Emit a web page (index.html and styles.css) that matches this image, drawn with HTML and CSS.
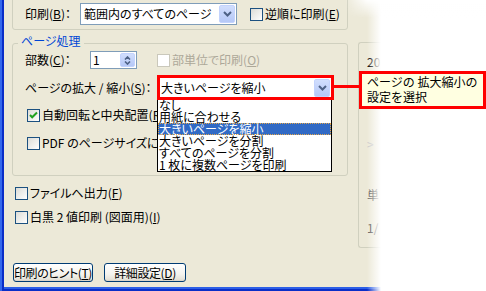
FILE: index.html
```html
<!DOCTYPE html>
<html lang="ja">
<head>
<meta charset="utf-8">
<title>印刷</title>
<link rel="stylesheet" href="styles.css">
</head>
<body>
<div class="dialog">
  <div class="main">
    <div class="grp-top">
      <span class="lbl lbl-print">印刷(<u>B</u>)：</span>
      <div class="combo combo-range">
        <span class="combo-text">範囲内のすべてのページ</span>
        <span class="combo-btn"><svg width="9" height="6" viewBox="0 0 9 6"><path d="M1 1l3.5 3.5L8 1" fill="none" stroke="#4D6185" stroke-width="2"/></svg></span>
      </div>
      <div class="chk-row chk-rev"><span class="chk"></span><span>逆順に印刷(<u>E</u>)</span></div>
    </div>

    <fieldset class="grp-page">
      <legend>ページ処理</legend>
      <div class="row row-copies">
        <span class="lbl lbl-copies">部数(<u>C</u>)：</span>
        <div class="spin">
          <span class="spin-val">1</span>
          <span class="spin-btn">
            <svg width="7" height="4" viewBox="0 0 7 4"><path d="M1 3.5L3.5 1 6 3.5" fill="none" stroke="#4D6185" stroke-width="1.6"/></svg>
            <svg width="7" height="4" viewBox="0 0 7 4"><path d="M1 .5L3.5 3 6 .5" fill="none" stroke="#4D6185" stroke-width="1.6"/></svg>
          </span>
        </div>
        <div class="chk-row chk-collate"><span class="chk chk-dis"></span><span>部単位で印刷(<u>O</u>)</span></div>
      </div>

      <div class="row row-scale">
        <span class="lbl lbl-scale">ページの拡大 / 縮小(<u>S</u>)：</span>
        <div class="scale-wrap">
          <div class="combo combo-scale">
            <span class="combo-text">大きいページを縮小</span>
            <span class="combo-btn"><svg width="9" height="6" viewBox="0 0 9 6"><path d="M1 1l3.5 3.5L8 1" fill="none" stroke="#4D6185" stroke-width="2"/></svg></span>
          </div>
          <ul class="droplist">
            <li>なし</li>
            <li>用紙に合わせる</li>
            <li class="sel">大きいページを縮小</li>
            <li>大きいページを分割</li>
            <li>すべてのページを分割</li>
            <li>1 枚に複数ページを印刷</li>
          </ul>
          <div class="annot"></div>
          <div class="connector"></div>
          <div class="callout">ページの 拡大縮小の<br>設定を選択</div>
        </div>
      </div>

      <div class="chk-row chk-in chk-auto"><span class="chk chk-on"><svg width="11" height="11" viewBox="0 0 11 11"><path d="M2 5l2.2 2.3L9 2.5" fill="none" stroke="#21A121" stroke-width="2"/></svg></span><span>自動回転と中央配置(<u>R</u>)</span></div>
      <div class="chk-row chk-in chk-pdf"><span class="chk"></span><span>PDF のページサイズに合わせる</span></div>
    </fieldset>

    <div class="chk-row chk-out chk-file"><span class="chk"></span><span>ファイルへ出力(<u>F</u>)</span></div>
    <div class="chk-row chk-out chk-bw"><span class="chk"></span><span>白黒 2 値印刷 (図面用)(<u>I</u>)</span></div>

    <div class="buttons">
      <button class="btn btn-hint">印刷のヒント(<u>T</u>)</button>
      <button class="btn btn-adv">詳細設定(<u>D</u>)</button>
    </div>
  </div>

  <div class="side">
    <div class="grp-side">
      <div class="side-line l1">20</div>
      <div class="side-line l2">&gt;</div>
      <div class="side-line l3">単</div>
      <div class="side-line l4">1/</div>
    </div>
  </div>

  <div class="fade"></div>
  <div class="fade-top"></div>
</div>
</body>
</html>
```

FILE: styles.css
```css
* { box-sizing: border-box; }
html, body { margin: 0; padding: 0; }
body {
  width: 486px;
  height: 291px;
  overflow: hidden;
  background: #fff;
  font-family: "Noto Sans CJK JP", "Noto Sans", sans-serif;
  font-size: 12px;
  line-height: 14px;
  color: #000;
}
u { text-decoration: underline; text-underline-offset: 1px; }

.dialog {
  position: relative;
  width: 486px;
  height: 291px;
  display: flex;
  align-items: flex-start;
  padding: 0 0 4px 12px;
  overflow: hidden;
  background:
    linear-gradient(to right, #3468EC 0, #3468EC 2px, #0A2EC8 2px, #0A2EC8 4px, transparent 4px),
    linear-gradient(to top, #0A2EC8 0, #0A2EC8 2px, #2C5FE6 2px, #2C5FE6 4px, transparent 4px),
    #ECE9D8;
}

.main {
  width: 336px;
  flex: none;
  display: flex;
  flex-direction: column;
  font-feature-settings: "palt";
}

.lbl { flex: none; white-space: nowrap; }

/* top group */
.grp-top {
  margin-top: -12px;
  height: 42px;
  border: 1px solid #D0D0BF;
  border-radius: 3px;
  padding: 10px 0 0 12px;
  display: flex;
  align-items: center;
}
.lbl-print { width: 55px; }

.combo {
  display: flex;
  align-items: center;
  background: #fff;
  border: 1px solid #7F9DB9;
  white-space: nowrap;
}
.combo-text { flex: 1; }
.combo-range { width: 157px; height: 22px; padding: 0 1px 0 3px; }
.combo-btn {
  flex: none;
  width: 16px;
  height: 18px;
  border-radius: 2px;
  border: 1px solid #C3D3FD;
  background: linear-gradient(#D1DEFD, #B5C8F7);
  display: flex;
  align-items: center;
  justify-content: center;
}

.chk-row { display: flex; align-items: center; gap: 2px; white-space: nowrap; }
.chk {
  flex: none;
  width: 13px;
  height: 13px;
  border: 1px solid #1C5180;
  background: linear-gradient(135deg, #DCDCD7 0%, #F4F4F2 70%, #fff 100%);
  display: flex;
  align-items: center;
  justify-content: center;
}
.chk-dis { border-color: #CAC8BB; background: #fff; }
.chk-rev { margin-left: 13px; }

/* page handling group */
.grp-page {
  margin: 4px 0 0;
  padding: 0 0 25px 0;
  border: 1px solid #D0D0BF;
  border-radius: 3px;
  min-width: 0;
}
.grp-page legend {
  margin-left: 5px;
  padding: 0 3px 4px;
  line-height: 14px;
  color: #0046D5;
}

.row { display: flex; align-items: center; padding-left: 12px; }
.row-copies { height: 16px; }
.lbl-copies { width: 65px; }

.spin {
  flex: none;
  width: 47px;
  height: 18px;
  border: 1px solid #7F9DB9;
  background: #fff;
  display: flex;
  align-items: center;
  padding: 1px 1px 1px 2px;
}
.spin-val { flex: 1; }
.spin-btn {
  flex: none;
  width: 15px;
  height: 14px;
  border-radius: 2px;
  border: 1px solid #C3D3FD;
  background: linear-gradient(#D1DEFD, #B5C8F7);
  display: flex;
  flex-direction: column;
  align-items: center;
  justify-content: center;
  gap: 1px;
}
.chk-collate { margin-left: 20px; color: #ACA899; }

.row-scale { margin-top: 7px; height: 25px; }
.lbl-scale { width: 132px; }
.scale-wrap { position: relative; flex: none; width: 177px; height: 25px; }
.combo-scale { width: 177px; height: 25px; padding: 0 3px 0 3px; }

.droplist {
  position: absolute;
  top: 24px;
  left: 0;
  width: 175px;
  margin: 0;
  padding: 0;
  list-style: none;
  background: #fff;
  border: 1px solid #000;
  border-top: none;
  z-index: 2;
}
.droplist li {
  height: 12px;
  line-height: 12px;
  padding-left: 1px;
  white-space: nowrap;
}
.droplist li.sel {
  background: #316AC5;
  color: #fff;
  outline: 1px dotted #E3A64A;
  outline-offset: -1px;
}

.annot {
  position: absolute;
  inset: 0;
  border: 3px solid #f00;
  pointer-events: none;
  z-index: 3;
}
.connector {
  position: absolute;
  left: 177px;
  top: 10px;
  width: 25px;
  height: 3px;
  background: #f00;
  z-index: 3;
}
.callout {
  position: absolute;
  left: 202px;
  top: -4px;
  width: 127px;
  height: 38px;
  border: 3px solid #f00;
  background: #FFFFE1;
  padding: 0 0 0 5px;
  line-height: 15px;
  white-space: nowrap;
  font-feature-settings: normal;
  z-index: 5;
}

.chk-in { padding-left: 14px; }
.chk-auto { margin-top: 8px; }
.chk-pdf { margin-top: 14px; }

.chk-out { padding-left: 3px; }
.chk-file { margin-top: 10px; }
.chk-bw { margin-top: 10px; }

.buttons { margin-top: 39px; display: flex; gap: 11px; padding-left: 1px; }
.btn {
  height: 19px;
  padding: 0;
  font: inherit;
  font-feature-settings: "palt";
  line-height: 14px;
  letter-spacing: -0.4px;
  color: #000;
  border: 1px solid #003C74;
  border-radius: 3px;
  background: linear-gradient(#FFFFFF, #F4F3EE 60%, #E6E3D9 90%, #D6D0C5);
  white-space: nowrap;
}
.btn-hint { width: 80px; }
.btn-adv { width: 82px; }

/* right group (mostly faded out) */
.side { flex: 1; margin-left: 10px; }
.grp-side {
  margin-top: 42px;
  height: 206px;
  border: 1px solid #D0D0BF;
  border-right: none;
  border-radius: 3px 0 0 3px;
  padding-left: 8px;
}
.side-line { line-height: 14px; white-space: nowrap; }
.l1 { margin-top: 12px; }
.l2 { margin-top: 68px; color: #C8C8C8; }
.l3 { margin-top: 37px; color: #555; }
.l4 { margin-top: 19px; color: #555; }

.fade {
  position: absolute;
  inset: 0;
  pointer-events: none;
  z-index: 4;
  background: linear-gradient(to right, rgba(255,255,255,0) 367px, #fff 381px);
}
.fade-top {
  position: absolute;
  top: 0;
  left: 345px;
  width: 141px;
  height: 18px;
  pointer-events: none;
  z-index: 4;
  background: linear-gradient(to bottom, rgba(255,255,255,0.95), rgba(255,255,255,0));
  -webkit-mask-image: linear-gradient(to right, transparent, #000 22px);
  mask-image: linear-gradient(to right, transparent, #000 22px);
}
```
